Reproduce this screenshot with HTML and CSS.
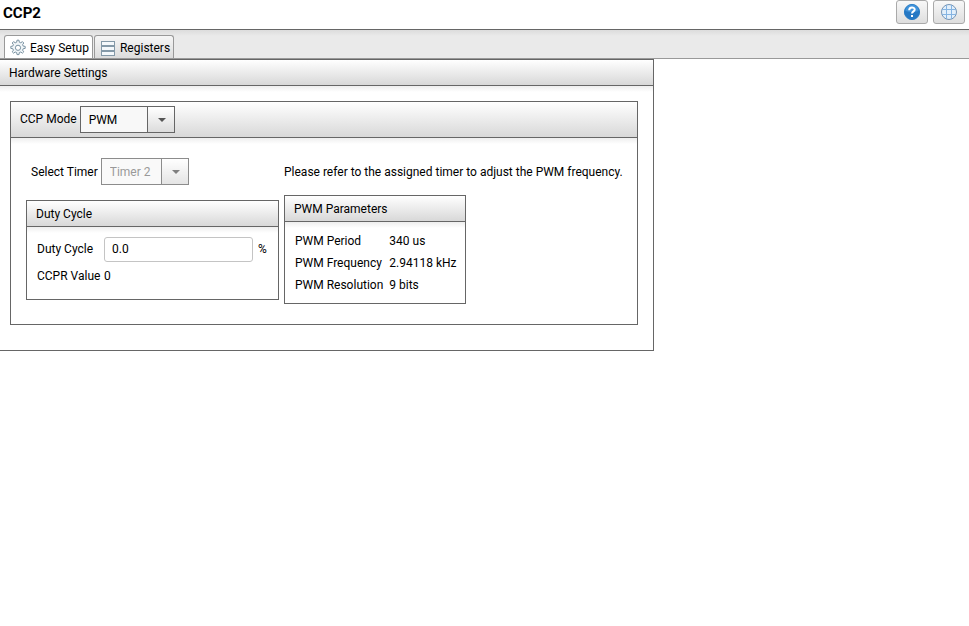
FILE: index.html
```
<!DOCTYPE html>
<html lang="en">

<head>
  <meta charset="UTF-8">
  <meta name="viewport" content="width=device-width, initial-scale=1.0">
  <title>CCP2</title>
  <link rel="stylesheet" href="styles.css">
</head>

<body>
  <header class="header">
    <h1>CCP2</h1>
    <div class="header-actions">
      <button type="button" class="icon-button" aria-label="Help">
        <svg width="18" height="18" viewBox="0 0 18 18">
          <circle cx="9" cy="9" r="7.600" fill="#2578c4" stroke="#2a7cc4" />
          <path d="M2.500 8a6.500 6.500 0 0 1 13 0c-4 1.500-9 1.500-13 0z" fill="#3f92da" />
          <path d="M6.200 7.200c0-3.700 5.500-3.500 5.500-.6 0 1.900-2.700 1.800-2.700 4" fill="none" stroke="#fff" stroke-width="2" />
          <rect x="8" y="12" width="2" height="2" fill="#fff" />
        </svg>
      </button>
      <button type="button" class="icon-button" aria-label="Web">
        <svg width="18" height="18" viewBox="0 0 18 18" fill="#e2effb" stroke="#85b4e2">
          <circle cx="9" cy="9" r="7.500" stroke="#7795b5" />
          <path d="M6.500 2v14M11.500 2v14M2 6.500h14M2 11.500h14" />
        </svg>
      </button>
    </div>
  </header>

  <nav class="tabs">
    <button type="button" class="tab active">
      <svg width="18" height="18" viewBox="0 0 18 18" fill="#f0f5f8" stroke="#7b93a2">
        <path d="M7.700 3.200 8 1.200h2l.3 2 1.500.6 1.600-1.200 1.400 1.400-1.200 1.600.6 1.500 2 .3v2l-2 .3-.6 1.500 1.200 1.600-1.400 1.400-1.600-1.200-1.500.6-.3 2H8l-.3-2-1.500-.6-1.600 1.200-1.400-1.400 1.200-1.600-.6-1.500-2-.3v-2l2-.3.6-1.500L3.200 4l1.400-1.400 1.600 1.200z" />
        <circle cx="9" cy="8.800" r="2.600" fill="#fff" />
      </svg>
      Easy Setup
    </button>
    <button type="button" class="tab">
      <svg width="18" height="18" viewBox="0 0 18 18" fill="#f4f8fb" stroke="#8499a8">
        <rect x="2.500" y="2.500" width="13" height="4" />
        <rect x="2.500" y="7.500" width="13" height="4" />
        <rect x="2.500" y="12.500" width="13" height="4" />
      </svg>
      Registers
    </button>
  </nav>

  <main class="panel hardware">
    <h2 class="panel-header">Hardware Settings</h2>
    <div class="panel-body">
      <section class="panel">
        <div class="panel-header mode-header">
          <label for="ccpMode">CCP Mode</label>
          <span class="combo">
            <select id="ccpMode" class="mode-select">
              <option>PWM</option>
            </select>
          </span>
        </div>

        <div class="panel-body settings">
          <div class="timer-row">
            <label for="timer">Select Timer</label>
            <span class="combo disabled">
              <select id="timer" class="timer-select" disabled>
                <option>Timer 2</option>
              </select>
            </span>
          </div>
          <p class="hint">Please refer to the assigned timer to adjust the PWM frequency.</p>

          <section class="panel">
            <h3 class="panel-header">Duty Cycle</h3>
            <div class="panel-body duty">
              <label for="dutyCycle">Duty Cycle</label>
              <input type="text" id="dutyCycle" value="0.0">
              <span>%</span>
              <span>CCPR Value</span>
              <span>0</span>
            </div>
          </section>

          <section class="panel parameters">
            <h3 class="panel-header">PWM Parameters</h3>
            <div class="panel-body">
              <table>
                <tr>
                  <th scope="row">PWM Period</th>
                  <td>340 us</td>
                </tr>
                <tr>
                  <th scope="row">PWM Frequency</th>
                  <td>2.94118 kHz</td>
                </tr>
                <tr>
                  <th scope="row">PWM Resolution</th>
                  <td>9 bits</td>
                </tr>
              </table>
            </div>
          </section>
        </div>
      </section>
    </div>
  </main>
</body>

</html>
```
FILE: styles.css
```
* {
  margin: 0;
  padding: 0;
  box-sizing: border-box;
}

body {
  font: 12px/16px Roboto, "Open Sans", sans-serif;
  background: #fff;
  color: #000;
}

button,
input,
select {
  font: inherit;
  color: inherit;
}

.header {
  display: flex;
  justify-content: space-between;
  height: 30px;
  padding: 0 4px 0 3px;
  border-bottom: 1px solid #666;
}

.header h1 {
  font-size: 15px;
  line-height: 26px;
  font-weight: 700;
}

.header-actions {
  display: flex;
  gap: 5px;
}

.icon-button {
  display: flex;
  align-items: center;
  justify-content: center;
  width: 32px;
  height: 24px;
  border: 1px solid #aaa;
  border-radius: 3px;
  background: linear-gradient(#f8f8f8, #dedede);
}

.tabs {
  display: flex;
  align-items: flex-end;
  gap: 1px;
  height: 29px;
  padding-left: 4px;
  border-bottom: 1px solid #999;
  background: linear-gradient(#dcdcdc, #eaeaea 6px);
}

.tab {
  display: flex;
  align-items: center;
  gap: 3px;
  height: 23px;
  padding: 2px 3px 0 4px;
  border: 1px solid #999;
  border-bottom: none;
  border-radius: 3px 3px 0 0;
  background: linear-gradient(#f6f6f6, #dcdcdc);
  white-space: nowrap;
}

.tab.active {
  background: #fff;
}

.panel {
  border: 1px solid #666;
  background: #fff;
}

.panel-header {
  height: 26px;
  padding: 0 9px;
  border-bottom: 1px solid #666;
  background: linear-gradient(#fff, #d8d8d8);
  font-size: 12px;
  line-height: 27px;
  font-weight: 400;
}

.panel-body {
  background: linear-gradient(#eee, #fff 6px);
}

.hardware {
  max-width: 654px;
  border-left: none;
}

.hardware > .panel-body {
  padding: 15px 15px 25px 10px;
}

.mode-header {
  display: flex;
  align-items: center;
  gap: 3px;
  height: 36px;
}

.combo {
  position: relative;
  display: flex;
}

.combo::after {
  content: "";
  position: absolute;
  top: 12px;
  right: 9px;
  border: 4px solid transparent;
  border-top-color: #555;
  border-bottom: none;
  pointer-events: none;
}

.combo select {
  appearance: none;
  height: 27px;
  padding: 0 28px 0 8px;
  border: 1px solid #666;
  border-radius: 0;
  background:
    linear-gradient(#666, #666) right 26px top / 1px 100% no-repeat,
    linear-gradient(#fff, #dcdcdc) right / 26px 100% no-repeat,
    #f8f8f8;
}

.combo .mode-select {
  width: 95px;
}

.combo .timer-select {
  width: 88px;
}

.combo.disabled {
  opacity: 0.75;
}

.combo.disabled select {
  color: #777;
  opacity: 1;
}

.settings {
  display: grid;
  grid-template-columns: 253px 1fr;
  align-items: center;
  gap: 10px 5px;
  padding: 20px 15px;
}

.hint {
  white-space: nowrap;
}

.timer-row {
  display: flex;
  align-items: center;
  gap: 3px;
  padding-left: 5px;
}

.duty {
  display: grid;
  grid-template-columns: 62px 149px auto;
  align-items: center;
  gap: 6px 5px;
  padding: 10px 10px 15px;
  white-space: nowrap;
}

.duty input {
  width: 100%;
  height: 25px;
  padding: 0 7px;
  border: 1px solid #c4c4c4;
  border-radius: 3px;
  background: #fff;
}

.parameters {
  justify-self: start;
}

.parameters .panel-body {
  padding: 8px 8px 7px 10px;
}

.parameters table {
  border-collapse: collapse;
}

.parameters th,
.parameters td {
  height: 22px;
  font-weight: 400;
  text-align: left;
}

.parameters th {
  padding-right: 6px;
}
```
